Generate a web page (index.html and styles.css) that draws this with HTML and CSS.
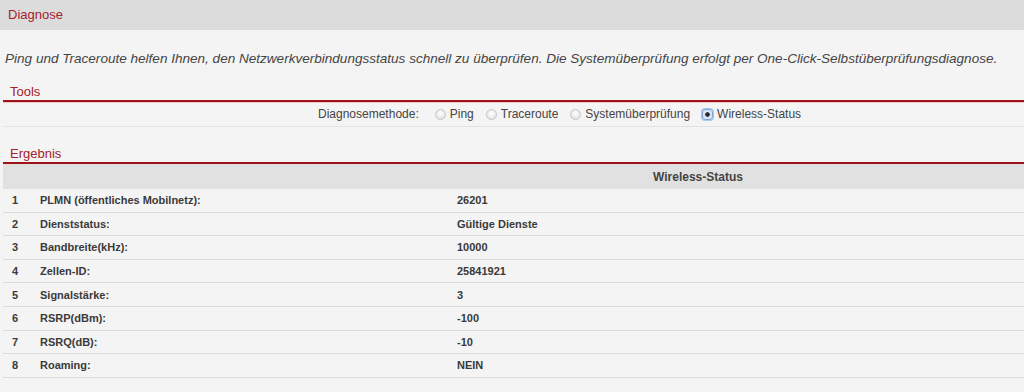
FILE: index.html
```html
<!DOCTYPE html>
<html lang="de">
<head>
<meta charset="utf-8">
<title>Diagnose</title>
<link rel="stylesheet" href="styles.css">
</head>
<body>
<div class="topbar">Diagnose</div>
<p class="desc">Ping und Traceroute helfen Ihnen, den Netzwerkverbindungsstatus schnell zu überprüfen. Die Systemüberprüfung erfolgt per One-Click-Selbstüberprüfungsdiagnose.</p>

<div class="section-title tools-title">Tools</div>
<div class="method-row">
  <span class="method-label">Diagnosemethode:</span>
  <label class="radio-item"><span class="radio"></span>Ping</label>
  <label class="radio-item"><span class="radio"></span>Traceroute</label>
  <label class="radio-item"><span class="radio"></span>Systemüberprüfung</label>
  <label class="radio-item"><span class="radio checked"></span>Wireless-Status</label>
</div>

<div class="section-title result-title">Ergebnis</div>
<div class="result">
  <div class="result-head"><span></span><span class="head-text">Wireless-Status</span></div>
  <div class="row"><span>1</span><span>PLMN (öffentliches Mobilnetz):</span><span>26201</span></div>
  <div class="row"><span>2</span><span>Dienststatus:</span><span>Gültige Dienste</span></div>
  <div class="row"><span>3</span><span>Bandbreite(kHz):</span><span>10000</span></div>
  <div class="row"><span>4</span><span>Zellen-ID:</span><span>25841921</span></div>
  <div class="row"><span>5</span><span>Signalstärke:</span><span>3</span></div>
  <div class="row"><span>6</span><span>RSRP(dBm):</span><span>-100</span></div>
  <div class="row"><span>7</span><span>RSRQ(dB):</span><span>-10</span></div>
  <div class="row"><span>8</span><span>Roaming:</span><span>NEIN</span></div>
</div>
</body>
</html>
```
FILE: styles.css
```css
html, body {
  margin: 0;
  padding: 0;
  background: #f4f4f4;
  font-family: "Liberation Sans", Arial, sans-serif;
  color: #333;
}

.topbar {
  height: 30px;
  line-height: 30px;
  background: #dcdcdc;
  padding-left: 8px;
  font-size: 13px;
  color: #a3222b;
}

.desc {
  margin: 20px 0 0 0;
  padding-left: 5px;
  line-height: 18px;
  font-size: 13.55px;
  font-style: italic;
  color: #444;
  white-space: nowrap;
}

.section-title {
  margin-left: 3px;
  padding-left: 7px;
  height: 16px;
  line-height: 16px;
  font-size: 13px;
  color: #a3222b;
  border-bottom: 2px solid #9e1219;
  box-shadow: 0 1px 0 #f2c4c4;
}

.tools-title {
  margin-top: 16px;
}

.method-row {
  margin-left: 3px;
  height: 24px;
  border-bottom: 1px solid #e2e2e2;
  display: flex;
  align-items: center;
  padding-left: 315px;
  font-size: 12px;
  color: #444;
}

.method-label {
  margin-right: 16px;
}

.radio-item {
  display: flex;
  align-items: center;
  margin-right: 12px;
}

.radio {
  width: 11px;
  height: 11px;
  border-radius: 50%;
  border: 1px solid #c4c4c4;
  background: radial-gradient(circle at 50% 40%, #ffffff 0%, #e6e6e6 70%, #d6d6d6 100%);
  box-sizing: border-box;
  margin-right: 4px;
}

.radio.checked {
  box-shadow: 0 0 0 1px #a9c7ea;
  border-radius: 3px;
  border-color: #7fa6d6;
  background: radial-gradient(circle, #2b2b2b 0 2px, #dbe8f7 2.5px, #c6d9ef 100%);
}

.result-title {
  margin-top: 19px;
}

.result {
  margin-left: 3px;
}

.result-head {
  display: grid;
  grid-template-columns: 369px 1fr;
  height: 25px;
  align-items: center;
  background: #e1e1e1;
  font-size: 12px;
  font-weight: bold;
  color: #444;
}

.head-text {
  text-align: center;
}

.row {
  display: grid;
  grid-template-columns: 37px 417px 1fr;
  height: 23.6px;
  box-sizing: border-box;
  border-bottom: 1px solid #dadada;
  align-items: center;
  font-size: 11px;
  font-weight: bold;
  color: #3a3a3a;
}

.row span:first-child {
  padding-left: 9px;
}
```
